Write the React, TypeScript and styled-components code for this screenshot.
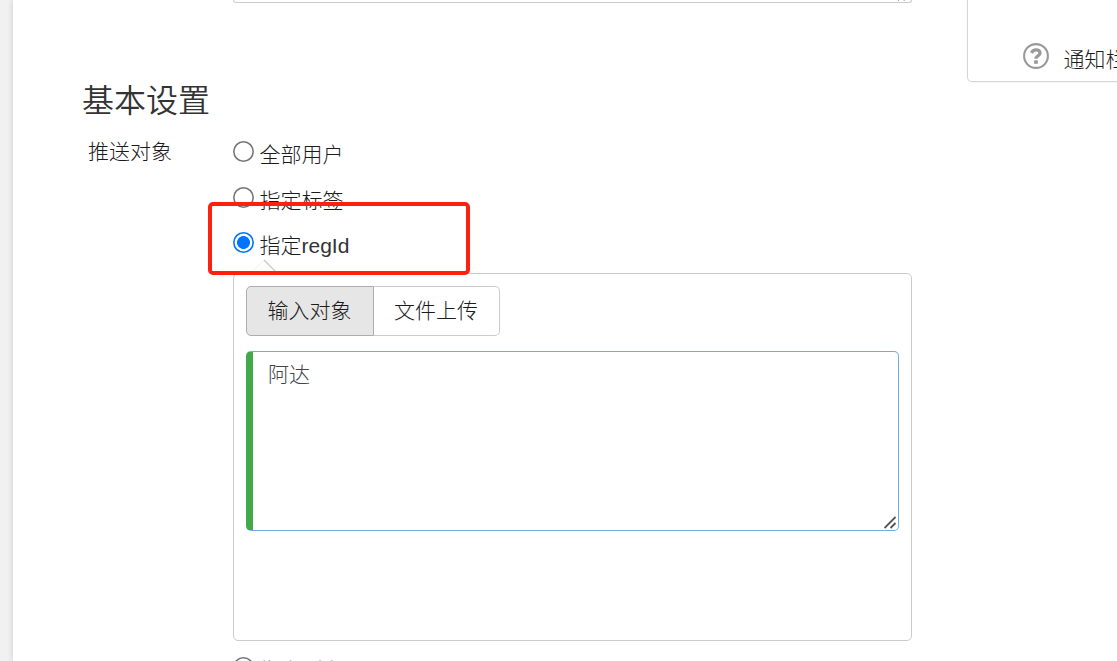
import React from 'react';
import styled, { createGlobalStyle } from 'styled-components';

const GlobalStyle = createGlobalStyle`
  * { box-sizing: border-box; }
  body {
    margin: 0;
    overflow: hidden;
    background: #f1f1f1;
    color: #1c1c1c;
    font: 300 21px/26px "Noto Sans CJK SC", "Liberation Sans", sans-serif;
  }
`;

const Page = styled.div`
  height: 661px;
  padding-left: 13px;
  overflow: hidden;
`;

const Sheet = styled.main`
  display: flex;
  align-items: flex-start;
  height: 100%;
  padding-left: 69px;
  background: #fff;
  box-shadow: 0 0 6px rgba(0, 0, 0, 0.16);
`;

const Form = styled.form`
  flex: none;
  width: 830px;
`;

const Grip = styled.svg`
  display: block;
  width: 13px;
  height: 14px;
  stroke: #555;
  stroke-width: 1.8;
`;

const ContentField = styled.div`
  display: flex;
  justify-content: flex-end;
  align-items: flex-end;
  height: 3px;
  margin-left: 151px;
  padding-right: 1px;
  overflow: hidden;
  border: 1px solid #ccc;
  border-top: 0;
  border-radius: 0 0 5px 5px;

  ${Grip} {
    height: 13px;
    flex: none;
  }
`;

const Heading = styled.h2`
  margin: 71px 0 0;
  color: #333;
  font-size: 32px;
  font-weight: 350;
  line-height: 48px;
`;

const Row = styled.div`
  display: grid;
  grid-template-columns: 151px 679px;
  margin-top: 15px;
`;

const Label = styled.div`
  padding-left: 6px;
`;

const Options = styled.div`
  display: flex;
  flex-direction: column;
  padding-top: 3px;
`;

const Option = styled.label<{ $gap: number; $before?: number }>`
  display: flex;
  flex: none;
  gap: 5.5px;
  height: 30px;
  margin-top: ${(p) => p.$before ?? 0}px;
  margin-bottom: ${(p) => p.$gap}px;
  white-space: nowrap;
`;

const Latin = styled.span`
  color: #333;
  font-family: "Liberation Sans", sans-serif;
  font-weight: 400;
`;

const Radio = styled.input.attrs({ type: 'radio', name: 'target' })`
  appearance: none;
  flex: none;
  width: 21px;
  height: 21px;
  margin: 1px 0 0;
  border-radius: 50%;
  background: #fff;
  box-shadow: inset 0 0 0 1.6px #767676;

  &:checked {
    background: radial-gradient(circle, #0075ff 6.1px, #fff 6.8px);
    box-shadow: inset 0 0 0 1.6px #0075ff;
  }
`;

const TargetBox = styled.section`
  position: relative;
  height: 368px;
  padding: 12px;
  border: 1px solid #ccc;
  border-radius: 5px;
`;

const Arrow = styled.svg`
  position: absolute;
  left: 16px;
  top: -16px;
  width: 28px;
  height: 16px;
`;

const Tabs = styled.div`
  display: flex;
`;

const Tab = styled.button<{ $active?: boolean }>`
  width: ${(p) => (p.$active ? 128 : 126)}px;
  height: 50px;
  padding: 0 1px 5px 0;
  border: 1px solid ${(p) => (p.$active ? '#adadad' : '#ccc')};
  border-left-width: ${(p) => (p.$active ? 1 : 0)}px;
  border-radius: ${(p) => (p.$active ? '5px 0 0 5px' : '0 5px 5px 0')};
  background: ${(p) => (p.$active ? '#e6e6e6' : '#fff')};
  color: inherit;
  font: inherit;
`;

const TextField = styled.div`
  display: flex;
  justify-content: space-between;
  height: 180px;
  margin-top: 15px;
  padding: 8px 1px 0 15px;
  border: 1px solid #66afe9;
  border-left: 7px solid #42a948;
  border-radius: 5px;
  color: #444;

  ${Grip} {
    align-self: flex-end;
  }
`;

const Preview = styled.aside`
  display: flex;
  flex: none;
  align-items: center;
  width: 420px;
  height: 82px;
  margin-left: 55px;
  padding: 30px 0 0 55px;
  border: 1px solid #d6d6d6;
  border-top: 0;
  border-radius: 0 0 5px 5px;
  box-shadow: 0 1px 2px rgba(0, 0, 0, 0.05);
  white-space: nowrap;
`;

const HelpIcon = styled.svg`
  flex: none;
  width: 26px;
  height: 26px;
  margin-right: 14.5px;
  fill: none;
  stroke: #999;
`;

const PreviewTitle = styled.span`
  padding-top: 5px;
`;

const Highlight = styled.div`
  position: absolute;
  left: -26px;
  top: -72px;
  width: 262px;
  height: 73px;
  border: 4px solid #ff2010;
  border-radius: 5px;
  pointer-events: none;
`;

const ResizeGrip = () => (
  <Grip viewBox="0 0 13 14">
    <path d="M0.5 12 11.5 1M6.5 12 11.5 7" />
  </Grip>
);

export default function App() {
  return (
    <Page>
      <GlobalStyle />
      <Sheet>
        <Form>
          <ContentField>
            <ResizeGrip />
          </ContentField>
          <Heading>基本设置</Heading>
          <Row>
            <Label>推送对象</Label>
            <Options>
              <Option $gap={16}>
                <Radio />
                全部用户
              </Option>
              <Option $gap={15}>
                <Radio />
                指定标签
              </Option>
              <Option $gap={12}>
                <Radio defaultChecked />
                <span>
                  指定<Latin>regId</Latin>
                </span>
              </Option>
              <TargetBox>
                <Arrow viewBox="0 0 28 16">
                  <path d="M0 16 14 2 28 16Z" fill="#fff" />
                  <path d="M2 14 14 2" fill="none" stroke="#eee" strokeWidth="0.7" />
                  <path d="M14 2 27 15" fill="none" stroke="#ccc" strokeWidth="1.4" />
                </Arrow>
                <Tabs>
                  <Tab type="button" $active>
                    输入对象
                  </Tab>
                  <Tab type="button">文件上传</Tab>
                </Tabs>
                <TextField>
                  阿达
                  <ResizeGrip />
                </TextField>
                <Highlight />
              </TargetBox>
              <Option $before={15} $gap={0}>
                <Radio />
                指定别名
              </Option>
            </Options>
          </Row>
        </Form>
        <Preview>
          <HelpIcon viewBox="0 0 26 26">
            <circle cx="13" cy="13" r="11.9" strokeWidth="2.1" />
            <path
              d="M8.4 9.9C9.6 7.7 11 6.8 13 6.8c2.3 0 4 1.3 4 3.1 0 2.9-4 2.9-4 5.9"
              strokeWidth="3.3"
            />
            <path d="M13 17.3v3.5" strokeWidth="3.7" />
          </HelpIcon>
          <PreviewTitle>通知栏</PreviewTitle>
        </Preview>
      </Sheet>
    </Page>
  );
}
